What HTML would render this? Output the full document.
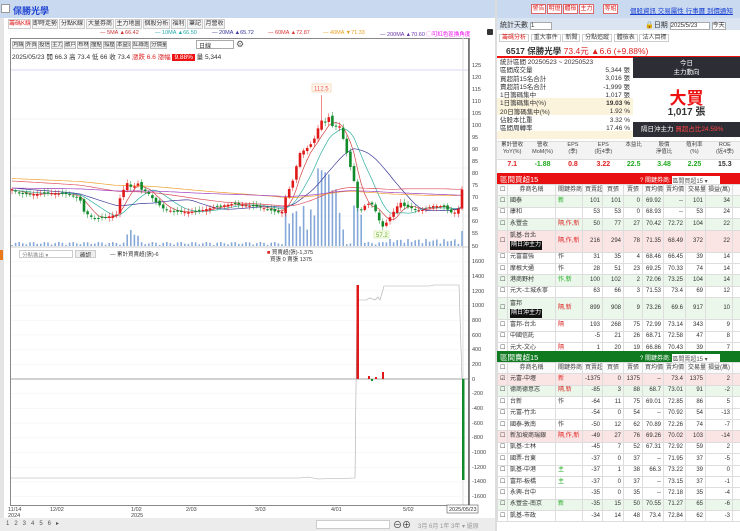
<!DOCTYPE html>
<html><head><meta charset="utf-8"><style>
*{margin:0;padding:0;box-sizing:border-box}
body{width:740px;height:531px;overflow:hidden;background:#fff;font-family:"Liberation Sans","Noto Sans CJK TC",sans-serif;font-size:7px;color:#333;position:relative}
.a{position:absolute;white-space:nowrap}
.tab{position:absolute;top:19px;height:10px;border:1px solid #ccc;background:#f4f4f4;font-size:6px;line-height:8px;text-align:center;white-space:nowrap;overflow:hidden}
.btn{position:absolute;top:41px;height:8px;border:1px solid #bbb;background:#f0f0f0;font-size:5.5px;line-height:6px;text-align:center;white-space:nowrap;overflow:hidden}
.rb{position:absolute;top:4px;height:10px;border:1px solid #d66;background:#fff;color:#d22;font-size:6px;line-height:8px;text-align:center;white-space:nowrap;overflow:hidden}
table{border-collapse:collapse;position:absolute;left:497px;width:243px;font-size:6px;table-layout:fixed}
td{border:1px solid #ddd;height:11.4px;line-height:9px;padding:0 2px;text-align:right;white-space:nowrap;overflow:hidden}
td:nth-child(2){text-align:left}td:nth-child(3){text-align:left}
tr.h td{text-align:center;background:#fafafa;color:#444}
tr.g td{background:#eaf7ea}tr.p td{background:#fbe4e4}
.d td{height:22px}
.k{display:inline-block;background:#111;color:#fff;padding:0 1px}
.r{color:#d22}.gr{color:#2a2}
</style></head><body>
<!-- header -->
<div class="a" style="left:0;top:0;width:740px;height:18px;background:#c9daf0"></div>
<div class="a" style="left:1px;top:4px;width:9px;height:9px;background:#fff;border:1px solid #999"></div>
<div class="a" style="left:13px;top:4px;font-size:9px;color:#1a3fd0;font-weight:bold">保勝光學</div>
<div class="rb" style="left:531px;width:15px">警告</div><div class="rb" style="left:547px;width:15px">明燈</div><div class="rb" style="left:563px;width:15px">體檢</div><div class="rb" style="left:579px;width:15px">主力</div><div class="rb" style="left:603px;width:15px">等組</div>
<div class="a" style="left:630px;top:5px;color:#1a3fd0;text-decoration:underline;font-size:6.5px">個股資訊 交易屬性 行事曆 到價通知</div>
<!-- left strip -->
<div class="a" style="left:0;top:18px;width:4px;height:513px;background:#e4e4e4"></div>
<div class="a" style="left:0;top:250px;width:3px;height:10px;background:#e87a1a"></div>
<!-- tabs -->
<div class="tab" style="left:8px;width:23px;color:#d22;background:#fff">籌碼K線</div><div class="tab" style="left:32px;width:26px">即時走勢</div><div class="tab" style="left:59px;width:26px">分點K線</div><div class="tab" style="left:86px;width:28px">大量券商</div><div class="tab" style="left:115px;width:27px">主力地圖</div><div class="tab" style="left:143px;width:27px">個股分析</div><div class="tab" style="left:171px;width:15px">福利</div><div class="tab" style="left:187px;width:16px">筆記</div><div class="tab" style="left:204px;width:21px">月營收</div>
<div class="a" style="left:100px;top:30px;font-size:5.5px;color:#c33">— 5MA ▲66.42</div>
<div class="a" style="left:155px;top:30px;font-size:5.5px;color:#2aa">— 10MA ▲66.50</div>
<div class="a" style="left:212px;top:30px;font-size:5.5px;color:#339">— 20MA ▲65.72</div>
<div class="a" style="left:268px;top:30px;font-size:5.5px;color:#d33">— 60MA ▲72.87</div>
<div class="a" style="left:323px;top:30px;font-size:5.5px;color:#e9a020">— 40MA ▼71.33</div>
<div class="a" style="left:380px;top:30px;font-size:5.5px;color:#63a">— 200MA ▲70.60 <span style="color:#e0e">◯可紅色區換角度</span></div>
<div class="a" style="left:487px;top:29px;width:6px;height:6px;background:#333;border-radius:1px"></div>
<!-- chart box -->
<div class="a" style="left:10px;top:38px;width:460px;height:468px;border:1px solid #888"></div>
<div class="btn" style="left:12px;width:12px">均線</div><div class="btn" style="left:25px;width:12px">外資</div><div class="btn" style="left:38px;width:12px">投信</div><div class="btn" style="left:51px;width:12px">主力</div><div class="btn" style="left:64px;width:12px">散戶</div><div class="btn" style="left:77px;width:12px">布林</div><div class="btn" style="left:90px;width:12px">撞點</div><div class="btn" style="left:103px;width:12px">撐壓</div><div class="btn" style="left:116px;width:15px">本益比</div><div class="btn" style="left:132px;width:17px">紅綠燈</div><div class="btn" style="left:150px;width:17px">分價量</div>
<div class="a" style="left:196px;top:40px;width:38px;height:9px;border:1px solid #aaa;background:#fff;font-size:6px;padding-left:2px">日線</div>
<div class="a" style="left:236px;top:39px;font-size:9px;color:#555">⚙</div>
<div class="a" style="left:12px;top:51px;font-size:6.5px">2025/05/23 開 66.3 高 73.4 低 66 收 73.4 <span class="r">漲跌 6.6 漲幅</span> <span style="background:#e11;color:#fff;padding:0 2px">9.88%</span> 量 5,344</div>
<svg class="a" style="left:0;top:0" width="495" height="531" id="sv">
<g stroke="#ecebf5" stroke-width="0.6">
<line x1="11" x2="468" y1="119" y2="119"/><line x1="11" x2="468" y1="168" y2="168"/><line x1="11" x2="468" y1="216" y2="216"/>
</g>
<line x1="11" x2="468" y1="70" y2="70" stroke="#c8c8f0" stroke-width="0.7"/>
<line x1="468.5" x2="468.5" y1="38" y2="505" stroke="#777"/>
<line x1="463" x2="463" y1="38" y2="505" stroke="#ddd"/>
<line x1="11" x2="468" y1="247" y2="247" stroke="#999" stroke-width="0.6"/>
<g id="ind"></g>
<g id="pc"></g>
<rect x="312" y="84" width="19" height="8" fill="#fff8ee" stroke="#f0c090" stroke-width="0.5"/><text x="314" y="90.5" font-size="6" fill="#e55">112.5</text>
<rect x="374" y="231" width="15" height="7" fill="#f6fde8" stroke="#bde090" stroke-width="0.5"/><text x="376" y="237" font-size="6" fill="#6a3">57.2</text>
<g font-size="5.5" fill="#444">
<text x="472" y="67">125</text><text x="472" y="79">120</text><text x="472" y="91">115</text><text x="472" y="103">110</text><text x="472" y="115">105</text><text x="472" y="127">100</text><text x="472" y="139">95</text><text x="472" y="151">90</text><text x="472" y="163">85</text><text x="472" y="175">80</text><text x="472" y="187">75</text><text x="472" y="199">70</text><text x="472" y="211">65</text><text x="472" y="223">60</text><text x="472" y="235">55</text><text x="472" y="248">50</text>
<text x="472" y="263">1600</text><text x="472" y="278">1400</text><text x="472" y="293">1200</text><text x="472" y="307">1000</text><text x="472" y="322">800</text><text x="472" y="337">600</text><text x="472" y="351">400</text><text x="472" y="366">200</text><text x="472" y="381">0</text><text x="472" y="395">-200</text><text x="472" y="410">-400</text><text x="472" y="425">-600</text><text x="472" y="439">-800</text><text x="472" y="454">-1000</text><text x="472" y="469">-1200</text><text x="472" y="483">-1400</text><text x="472" y="498">-1600</text>
<text x="8" y="511">11/14</text><text x="8" y="517">2024</text><text x="50" y="511">12/02</text><text x="131" y="511">1/02</text><text x="131" y="517">2025</text><text x="186" y="511">2/03</text><text x="255" y="511">3/03</text><text x="331" y="511">4/01</text><text x="403" y="511">5/02</text>
</g>
<rect x="447" y="505" width="31" height="8" fill="#fff" stroke="#555" stroke-width="0.6"/><text x="449" y="511" font-size="5.5" fill="#333">2025/05/23</text>
</svg>
<div class="a" style="left:19px;top:250px;width:54px;height:8px;border:1px solid #ccc;font-size:5.5px;color:#888;padding-left:2px;overflow:hidden">分點進出 ▾</div>
<div class="a" style="left:75px;top:250px;width:21px;height:8px;border:1px solid #ccc;background:#eee;font-size:5.5px;text-align:center;overflow:hidden">確認</div>
<div class="a" style="left:110px;top:250px;font-size:5.5px">— 累計買賣超(張)-6</div>
<div class="a" style="left:267px;top:250px;font-size:5.5px;line-height:7px"><span class="r">■</span> 買賣超(張)-1,375<br>&nbsp;&nbsp;買張 0 賣張 1375</div>
<!-- bottom bar -->
<div class="a" style="left:0;top:518px;width:495px;height:13px;background:#ececec"></div>
<div class="a" style="left:6px;top:520px;font-size:6px;color:#555;letter-spacing:5px">123456▸</div>
<div class="a" style="left:316px;top:520px;width:74px;height:9px;background:#fff;border:1px solid #ccc"></div>
<div class="a" style="left:393px;top:518px;font-size:9px">⊖⊕</div>
<div class="a" style="left:418px;top:521px;font-size:6px;color:#999">3月 6月 1年 3年 ▾ 還原</div>
<!-- right panel -->
<div class="a" style="left:495px;top:0;width:2px;height:531px;background:#ddd"></div>
<div class="a" style="left:497px;top:18px;width:243px;height:12px;background:#dbe5f1"></div>
<div class="a" style="left:500px;top:20px;font-size:7px">統計天數 <span style="display:inline-block;width:22px;height:8px;border:1px solid #aaa;background:#fff;font-size:6px">1</span></div>
<div class="a" style="left:645px;top:20px;font-size:7px">🔒日期 <span style="display:inline-block;width:40px;height:8px;border:1px solid #aaa;background:#fff;font-size:6px">2025/5/23</span> <span style="border:1px solid #aaa;font-size:6px;background:#fff">今天</span></div>
<div class="a" style="left:499px;top:32px;font-size:6px;color:#444"><span class="r" style="border:1px solid #ccc;padding:0 2px">籌碼分析</span> <span style="border:1px solid #ccc;padding:0 2px">重大事件</span> <span style="border:1px solid #ccc;padding:0 2px">新聞</span> <span style="border:1px solid #ccc;padding:0 2px">分點追蹤</span> <span style="border:1px solid #ccc;padding:0 2px">體檢表</span> <span style="border:1px solid #ccc;padding:0 2px">法人目標</span></div>
<div class="a" style="left:506px;top:45px;font-size:8.5px"><b>6517 保勝光學</b> <span class="r">73.4元 ▲6.6 (+9.88%)</span></div>
<div class="a" style="left:497px;top:56px;width:243px;height:1.5px;background:#e11"></div>
<div class="a" style="left:497px;top:98px;width:136px;height:17px;background:#fbf3dc"></div>
<div class="a" style="left:497px;top:131px;width:136px;height:8px;background:#fbf3dc"></div>
<div class="a" style="left:500px;top:59px;font-size:6.5px;line-height:8.3px">統計區間 20250523 ~ 20250523<br>區間成交量<br>買超前15名合計<br>賣超前15名合計<br>1日籌碼集中<br>1日籌碼集中(%)<br>20日籌碼集中(%)<br>佔股本比重<br>區間周轉率</div>
<div class="a" style="left:580px;top:67px;font-size:6.5px;line-height:8.3px;text-align:right;width:50px">5,344 張<br>3,016 張<br>-1,999 張<br>1,017 張<br><b>19.03 %</b><br>1.92 %<br>3.32 %<br>17.46 %</div>
<div class="a" style="left:633px;top:57px;width:107px;height:21px;background:#2d2d35;color:#fff;font-size:6.5px;text-align:center;line-height:9px;padding-top:2px">今日<br>主力動向</div>
<div class="a" style="left:633px;top:84px;width:107px;text-align:center;color:#e11;font-size:17px;font-weight:bold">大買</div>
<div class="a" style="left:633px;top:103px;width:107px;text-align:center;font-size:10px;font-weight:bold">1,017 張</div>
<div class="a" style="left:633px;top:122px;width:107px;height:15px;background:#2d2d35;color:#fff;font-size:6.5px;line-height:15px;padding-left:8px">隔日沖主力 <span style="color:#f44">買超占比24.59%</span></div>
<div class="a" style="left:497px;top:141px;width:243px;height:19px;background:#f3f3f3;border-top:1px solid #ddd;border-bottom:1px solid #ddd"></div>
<div class="a" style="left:497px;top:142px;width:243px;font-size:5.5px;color:#444;display:flex;text-align:center;line-height:7px"><div style="flex:1">累計營收<br>YoY(%)</div><div style="flex:1">營收<br>MoM(%)</div><div style="flex:1">EPS<br>(季)</div><div style="flex:1">EPS<br>(近4季)</div><div style="flex:1">本益比</div><div style="flex:1">股價<br>淨值比</div><div style="flex:1">殖利率<br>(%)</div><div style="flex:1">ROE<br>(近4季)</div></div>
<div class="a" style="left:497px;top:161px;width:243px;font-size:7px;font-weight:bold;display:flex;text-align:center"><div style="flex:1" class="r">7.1</div><div style="flex:1;color:#2a2">-1.88</div><div style="flex:1" class="r">0.8</div><div style="flex:1" class="r">3.22</div><div style="flex:1;color:#2a2">22.5</div><div style="flex:1;color:#2a2">3.48</div><div style="flex:1;color:#2a2">2.25</div><div style="flex:1">15.3</div></div>
<div class="a" style="left:497px;top:173px;width:243px;height:11px;background:#e81010"></div>
<div class="a" style="left:500px;top:174px;color:#fff;font-size:7.5px">區間買超15</div>
<div class="a" style="left:640px;top:175px;color:#fff;font-size:6px">? 關鍵券商: <span style="display:inline-block;width:48px;height:8px;background:#fff;color:#555;vertical-align:middle">區間買超15 ▾</span></div>
<table style="top:184px">
<colgroup><col style="width:10px"><col style="width:48px"><col style="width:27px"><col style="width:20px"><col style="width:21px"><col style="width:19px"><col style="width:21px"><col style="width:22px"><col style="width:20px"><col style="width:27px"><col style="width:8px"></colgroup>
<tr class="h"><td>☐</td><td>券商名稱</td><td>關鍵券商</td><td>買賣超</td><td>買張</td><td>賣張</td><td>買均價</td><td>賣均價</td><td>交易量</td><td>損益(萬)</td><td></td></tr>
<tr class="g"><td>☐</td><td>國泰</td><td class="gr">新</td><td>101</td><td>101</td><td>0</td><td>69.92</td><td>--</td><td>101</td><td>34</td><td></td></tr>
<tr><td>☐</td><td>康和</td><td></td><td>53</td><td>53</td><td>0</td><td>68.93</td><td>--</td><td>53</td><td>24</td><td></td></tr>
<tr class="g"><td>☐</td><td>永豐金</td><td class="r">隔,作,新</td><td>50</td><td>77</td><td>27</td><td>70.42</td><td>72.72</td><td>104</td><td>22</td><td></td></tr>
<tr class="p d"><td>☐</td><td>凱基-台北<br><span class="k">隔日沖主力</span></td><td class="r">隔,作,新</td><td>216</td><td>294</td><td>78</td><td>71.35</td><td>68.49</td><td>372</td><td>22</td><td></td></tr>
<tr><td>☐</td><td>元富富強</td><td>作</td><td>31</td><td>35</td><td>4</td><td>68.46</td><td>66.45</td><td>39</td><td>14</td><td></td></tr>
<tr><td>☐</td><td>摩根大通</td><td>作</td><td>28</td><td>51</td><td>23</td><td>69.25</td><td>70.33</td><td>74</td><td>14</td><td></td></tr>
<tr class="g"><td>☐</td><td>港商野村</td><td class="gr">作,新</td><td>100</td><td>102</td><td>2</td><td>72.06</td><td>73.25</td><td>104</td><td>14</td><td></td></tr>
<tr><td>☐</td><td>元大-土城永寧</td><td></td><td>63</td><td>66</td><td>3</td><td>71.53</td><td>73.4</td><td>69</td><td>12</td><td></td></tr>
<tr class="g d"><td>☐</td><td>富邦<br><span class="k">隔日沖主力</span></td><td class="r">隔,新</td><td>899</td><td>908</td><td>9</td><td>73.26</td><td>69.6</td><td>917</td><td>10</td><td></td></tr>
<tr><td>☐</td><td>富邦-台北</td><td class="r">隔</td><td>193</td><td>268</td><td>75</td><td>72.99</td><td>73.14</td><td>343</td><td>9</td><td></td></tr>
<tr><td>☐</td><td>中國信託</td><td></td><td>-5</td><td>21</td><td>26</td><td>68.71</td><td>72.58</td><td>47</td><td>8</td><td></td></tr>
<tr><td>☐</td><td>元大-文心</td><td class="r">隔</td><td>1</td><td>20</td><td>19</td><td>66.86</td><td>70.43</td><td>39</td><td>7</td><td></td></tr>
</table>
<div class="a" style="left:497px;top:351px;width:243px;height:11px;background:#107a20"></div>
<div class="a" style="left:500px;top:352px;color:#fff;font-size:7.5px">區間賣超15</div>
<div class="a" style="left:640px;top:353px;color:#fff;font-size:6px">? 關鍵券商: <span style="display:inline-block;width:48px;height:8px;background:#fff;color:#555;vertical-align:middle">區間賣超15 ▾</span></div>
<table style="top:362px">
<colgroup><col style="width:10px"><col style="width:48px"><col style="width:27px"><col style="width:20px"><col style="width:21px"><col style="width:19px"><col style="width:21px"><col style="width:22px"><col style="width:20px"><col style="width:27px"><col style="width:8px"></colgroup>
<tr class="h"><td>☐</td><td>券商名稱</td><td>關鍵券商</td><td>買賣超</td><td>買張</td><td>賣張</td><td>買均價</td><td>賣均價</td><td>交易量</td><td>損益(萬)</td><td></td></tr>
<tr class="p"><td>☑</td><td>元富-中壢</td><td class="r">新</td><td>-1375</td><td>0</td><td>1375</td><td>--</td><td>73.4</td><td>1375</td><td>2</td><td></td></tr>
<tr class="g"><td>☐</td><td>德商德意志</td><td class="r">隔,新</td><td>-85</td><td>3</td><td>88</td><td>68.7</td><td>73.01</td><td>91</td><td>-2</td><td></td></tr>
<tr><td>☐</td><td>台新</td><td>作</td><td>-64</td><td>11</td><td>75</td><td>69.01</td><td>72.85</td><td>86</td><td>5</td><td></td></tr>
<tr><td>☐</td><td>元富-竹北</td><td></td><td>-54</td><td>0</td><td>54</td><td>--</td><td>70.92</td><td>54</td><td>-13</td><td></td></tr>
<tr><td>☐</td><td>國泰-敦南</td><td>作</td><td>-50</td><td>12</td><td>62</td><td>70.89</td><td>72.26</td><td>74</td><td>-7</td><td></td></tr>
<tr class="p"><td>☐</td><td>新加坡商瑞銀</td><td class="r">隔,作,新</td><td>-49</td><td>27</td><td>76</td><td>69.26</td><td>70.02</td><td>103</td><td>-14</td><td></td></tr>
<tr><td>☐</td><td>凱基-士林</td><td></td><td>-45</td><td>7</td><td>52</td><td>67.31</td><td>72.92</td><td>59</td><td>2</td><td></td></tr>
<tr><td>☐</td><td>國票-台東</td><td></td><td>-37</td><td>0</td><td>37</td><td>--</td><td>71.95</td><td>37</td><td>-5</td><td></td></tr>
<tr><td>☐</td><td>凱基-中港</td><td class="gr">主</td><td>-37</td><td>1</td><td>38</td><td>66.3</td><td>73.22</td><td>39</td><td>0</td><td></td></tr>
<tr><td>☐</td><td>富邦-板橋</td><td class="gr">主</td><td>-37</td><td>0</td><td>37</td><td>--</td><td>73.15</td><td>37</td><td>-1</td><td></td></tr>
<tr><td>☐</td><td>永興-台中</td><td></td><td>-35</td><td>0</td><td>35</td><td>--</td><td>72.18</td><td>35</td><td>-4</td><td></td></tr>
<tr class="g"><td>☐</td><td>永豐金-南京</td><td class="gr">新</td><td>-35</td><td>15</td><td>50</td><td>70.55</td><td>71.27</td><td>65</td><td>-6</td><td></td></tr>
<tr><td>☐</td><td>凱基-市政</td><td></td><td>-34</td><td>14</td><td>48</td><td>73.4</td><td>72.84</td><td>62</td><td>-3</td><td></td></tr>
</table>
<script>
var NS="http://www.w3.org/2000/svg";
function el(t,a,p){var e=document.createElementNS(NS,t);for(var k in a)e.setAttribute(k,a[k]);p.appendChild(e);return e;}
var P=[[35,73],[60,71],[100,71],[140,72],[180,72],[210,72],[240,70],[250,65],[280,62],[310,62],[350,63],[358,69],[380,76],[400,73],[410,77],[420,73],[440,72],[465,68],[490,65],[520,64],[560,64],[600,65],[650,67],[700,68],[740,67],[780,66],[820,64],[845,63],[855,69],[880,77],[890,83],[900,88],[920,90],[940,93],[955,99],[965,102],[975,101],[985,104],[1000,99],[1010,100],[1020,100],[1063,77],[1075,64],[1085,66],[1100,68],[1115,68],[1130,64],[1140,60],[1150,58],[1170,62],[1190,66],[1200,68],[1215,66],[1240,65],[1260,64],[1300,66],[1330,66],[1360,63],[1380,66],[1390,73]];
function val(x){var zx=x*3;if(zx<=P[0][0])return P[0][1];for(var i=1;i<P.length;i++){if(zx<=P[i][0]){var t=(zx-P[i-1][0])/(P[i][0]-P[i-1][0]);return P[i-1][1]+t*(P[i][1]-P[i-1][1]);}}return P[P.length-1][1];}
function Y(p){return 246-(p-50)*2.413;}
var g=document.getElementById('pc'),cl=[],xs=[];
for(var x=12;x<=463;x+=3.6){cl.push(val(x)+Math.sin(x*1.7)*0.6);xs.push(x);}
cl[cl.length-1]=73.4;
for(var i=0;i<xs.length;i++){var x=xs[i],h=1+Math.abs(Math.sin(i*2.3))*3;
if(x>124&&x<140)h=6+Math.abs(Math.sin(i))*10;
if(x>285&&x<345)h=10+Math.abs(Math.sin(i*1.3))*30;
if(x>318&&x<330)h=70+Math.abs(Math.sin(i*3))*15;
if(x>330&&x<342)h=30+Math.abs(Math.sin(i))*30;
if(x>352&&x<362)h=20+Math.abs(Math.sin(i))*30;
if(x>385)h=2+Math.abs(Math.sin(i*1.9))*5;
if(i==xs.length-1)h=15;
el('rect',{x:x-0.8,y:246-h,width:1.6,height:h,fill:'#86a8d8'},g);}
function ma(n,col,base){var pts=[];for(var i=0;i<cl.length;i++){var s=0,c=0;for(var j=i-n+1;j<=i;j++){s+=(j<0?base:cl[j]);c++;}pts.push(xs[i].toFixed(1)+','+Y(s/c).toFixed(1));}el('polyline',{points:pts.join(' '),fill:'none',stroke:col,'stroke-width':0.7},g);}
ma(5,'#d04040',73);ma(10,'#30b0a0',73);ma(20,'#3a3a9a',74);ma(60,'#e05060',77);ma(100,'#f0a030',78);ma(140,'#a040c0',74);
for(var i=0;i<cl.length;i++){var c=cl[i],o=i?cl[i-1]+Math.sin(i*5.1)*0.6:73;var up=c>=o;var col=up?'#e01818':'#118a2a';
var hi=Math.max(o,c)+0.6+Math.abs(Math.sin(i*3.3)),lo=Math.min(o,c)-0.6-Math.abs(Math.cos(i*2.1));
if(Math.abs(xs[i]-322)<2)hi=112.5;
el('line',{x1:xs[i],x2:xs[i],y1:Y(hi),y2:Y(lo),stroke:col,'stroke-width':0.5},g);
var y1=Y(Math.max(o,c)),hh=Math.max(1,Y(Math.min(o,c))-y1);el('rect',{x:xs[i]-1.3,y:y1,width:2.6,height:hh,fill:col},g);}
var d=document.getElementById('ind');
for(var v=-1600;v<=1600;v+=200){if(v)el('line',{x1:11,x2:468,y1:379-v*0.0735,y2:379-v*0.0735,stroke:'#f2f2f2','stroke-width':0.5},d);}
el('line',{x1:11,x2:468,y1:379,y2:379,stroke:'#888','stroke-width':0.8},d);
el('polyline',{points:'11,478 300,478 308,477 318,479 355,478 357,300 366,300 370,298 375,300 378,297 380,300 384,286 430,286 434,285 459,285 462,379',fill:'none',stroke:'#aaa','stroke-width':0.6},d);
el('rect',{x:356.5,y:285,width:2.5,height:94,fill:'#e01818'},d);
el('rect',{x:368,y:376,width:2,height:3,fill:'#e01818'},d);el('rect',{x:375,y:377,width:2,height:2,fill:'#e01818'},d);el('rect',{x:382,y:372,width:2,height:7,fill:'#e01818'},d);el('rect',{x:371,y:379,width:2,height:2,fill:'#118a2a'},d);
el('rect',{x:462,y:379,width:2.5,height:101,fill:'#118a2a'},d);
</script>
</body></html>
